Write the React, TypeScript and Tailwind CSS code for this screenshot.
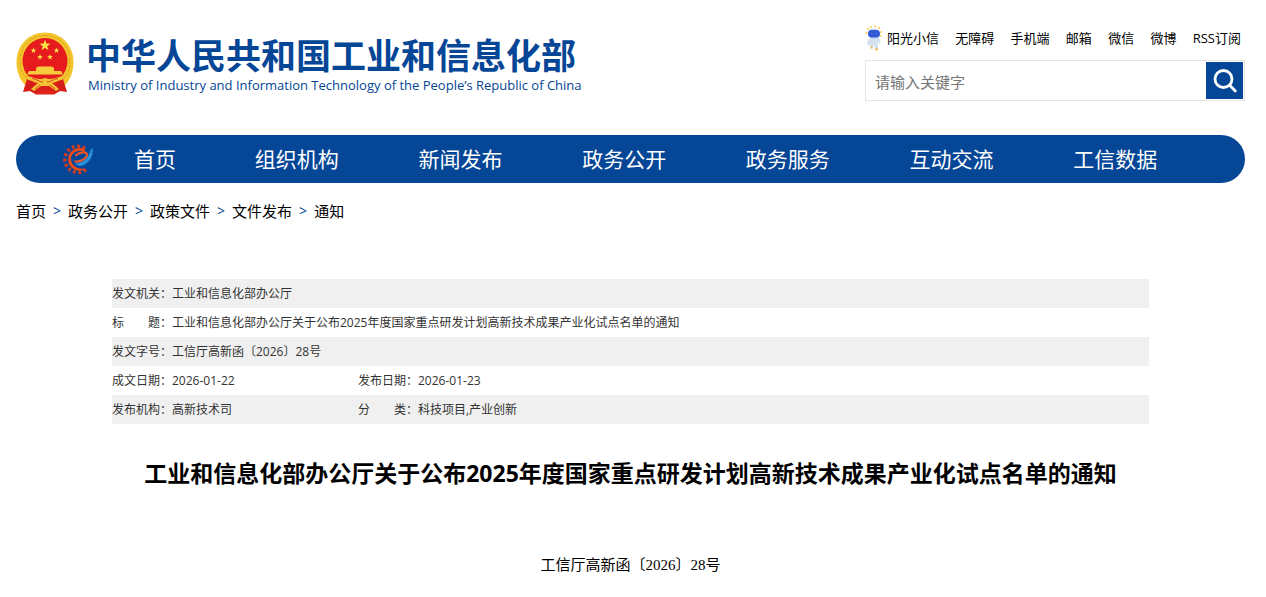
const topLinks = ["阳光小信", "无障碍", "手机端", "邮箱", "微信", "微博", "RSS订阅"];
const navItems = ["组织机构", "新闻发布", "政务公开", "政务服务", "互动交流", "工信数据"];
const crumbs = ["首页", "政务公开", "政策文件", "文件发布", "通知"];

const noticeTitle = "工业和信息化部办公厅关于公布2025年度国家重点研发计划高新技术成果产业化试点名单的通知";

const metaRows: [string, string][][] = [
  [["发文机关：", "工业和信息化部办公厅"]],
  [["标\u3000\u3000题：", noticeTitle]],
  [["发文字号：", "工信厅高新函〔2026〕28号"]],
  [
    ["成文日期：", "2026-01-22"],
    ["发布日期：", "2026-01-23"],
  ],
  [
    ["发布机构：", "高新技术司"],
    ["分\u3000\u3000类：", "科技项目,产业创新"],
  ],
];

const STAR = "0,-1 0.235,-0.324 0.951,-0.309 0.38,0.124 0.588,0.809 0,0.4 -0.588,0.809 -0.38,0.124 -0.951,-0.309 -0.235,-0.324";

function Star({ x, y, r }: { x: number; y: number; r: number }) {
  return <polygon points={STAR} transform={`translate(${x} ${y}) scale(${r})`} fill="#ffe14a" />;
}

function Emblem() {
  return (
    <svg viewBox="0 0 58 64" className="h-16 w-[58px] shrink-0" aria-hidden="true">
      <path d="M29 0.5C13 0.5 0.5 13 0.5 30C0.5 40 4 48 9 53L20 57H38L49 53C54 48 57.500 40 57.500 30C57.500 13 45 0.500 29 0.500Z" fill="#f3c62e" />
      <path d="M29 3.500C15 3.500 4 14 4 29C4 38 7 43 12 48M29 3.500C43 3.500 54 14 54 29C54 38 51 43 46 48" fill="none" stroke="#dfa41f" strokeWidth="1" strokeDasharray="3 1" />
      <ellipse cx="29" cy="29" rx="22.500" ry="23" fill="#e51b1d" />
      <Star x={29} y={13.5} r={5.8} />
      <Star x={17.5} y={18.5} r={3} />
      <Star x={40.5} y={18.5} r={3} />
      <Star x={24} y={25} r={3} />
      <Star x={34} y={25} r={3} />
      <path d="M22 34.500H36L38 36V39H45L47 42.500H11L13 39H20V36Z" fill="#f6cb3c" />
      <path d="M11 47L7 60L14 59L20 62.500H38L44 59L51 60L47 47Z" fill="#d81e18" />
      <path d="M10 44C17 44 20 49 29 46C38 49 41 44 48 44L46 48C42 48 40 51 36 51L43 57L40 59L33 54H25L18 59L15 57L22 51C18 51 16 48 12 48Z" fill="#f3c335" />
      <path d="M16 46.500C21 47 23 50 27 50M42 46.500C37 47 35 50 31 50M24 53L19 57M34 53L39 57" fill="none" stroke="#dc4a1c" strokeWidth="1" />
      <path d="M22 58.500H36L38 62H20Z" fill="#e2251c" />
    </svg>
  );
}

function Mascot() {
  return (
    <svg viewBox="0 0 18 26" className="h-[26px] w-[18px] shrink-0" aria-hidden="true">
      <g fill="#ffcf3a">
        <circle cx="3" cy="4" r="1" />
        <circle cx="6" cy="2" r="1" />
        <circle cx="10" cy="1.300" r="1" />
        <circle cx="14" cy="3" r="1" />
        <circle cx="16" cy="7" r="1" />
        <circle cx="1.500" cy="8" r="1" />
        <circle cx="15.500" cy="11" r="0.900" />
      </g>
      <path d="M5 12L2 18L3.500 21L5 19L5 23H8L9 19L10 24H13L13 16L15 20L15.500 17L13 11Z" fill="#d3e0f0" />
      <rect x="3" y="3.500" width="12" height="10" rx="5" fill="#c9daf6" />
      <rect x="3" y="5" width="12" height="7.500" rx="3.700" fill="#3158d4" />
      <path d="M6 8.500H7.500M10.500 8.500H12" stroke="#4f7de8" strokeWidth="1" />
      <path d="M5.500 22.500H7.500M10 24.300H13" stroke="#f7bd45" strokeWidth="1.800" />
    </svg>
  );
}

function GearLogo() {
  return (
    <svg viewBox="0 0 32 32" className="h-8 w-8 shrink-0" aria-hidden="true">
      <path d="M23 5.500A13 13 0 1 0 24 26.500" fill="none" stroke="#cf3a20" strokeWidth="3.600" strokeDasharray="2.800 2.600" />
      <path d="M23 6.500A11.300 11.300 0 1 0 24 25.500C15 27 9 22 9 16C9 10 16 6 23 8.500Z" fill="#ee4a16" />
      <path d="M12.500 18.300C17 19.500 25.500 16 25 11.500C24.500 8 17 9 13.500 13" fill="none" stroke="#f1562a" strokeWidth="2.200" />
      <path d="M13 20C20 21 27 15 28 7L31 5C32 14 25 24 17 23C15 22.500 13.500 21.500 13 20Z" fill="#1e82cf" />
      <path d="M17 21.300C22 21 27 17 29.500 10" stroke="#4faee8" strokeWidth="0.900" fill="none" />
    </svg>
  );
}

export default function App() {
  return (
    <div className="bg-white pr-[21px] pl-4 font-['Open_Sans','Noto_Sans_CJK_SC',sans-serif] text-black">
      <header className="flex items-start justify-between pt-6">
        <a href="#home" className="flex gap-3 pt-2 text-[#054696]">
          <Emblem />
          <span className="flex flex-col gap-px whitespace-nowrap pt-1">
            <span className="text-[35px] leading-10 font-bold">中华人民共和国工业和信息化部</span>
            <span className="pl-0.5 text-[13px] leading-4 font-medium">
              Ministry of Industry and Information Technology of the People’s Republic of China
            </span>
          </span>
        </a>
        <div className="flex w-[380px] flex-col gap-2">
          <nav aria-label="快捷链接" className="flex h-7 items-center justify-between pr-1 text-[13px] leading-5 whitespace-nowrap">
            {topLinks.map((label, i) => (
              <a key={label} href="#link" className="flex items-center gap-1 hover:text-[#054696]">
                {i === 0 && <Mascot />}
                {label}
              </a>
            ))}
          </nav>
          <form role="search" className="flex border border-[#e5e5e5] p-px" onSubmit={(e) => e.preventDefault()}>
            <input
              type="text"
              aria-label="请输入关键字"
              placeholder="请输入关键字"
              className="min-w-0 flex-1 px-2 pt-1 text-[15px] outline-none placeholder:text-[#757575]"
            />
            <button type="submit" aria-label="搜索" className="flex h-[37px] w-[37px] items-center justify-center bg-[#054696]">
              <svg viewBox="0 0 24 24" className="h-6 w-6" fill="none" stroke="white" strokeWidth="2.800" strokeLinecap="round" aria-hidden="true">
                <circle cx="10.500" cy="10" r="8.500" />
                <path d="M16.500 16L22.300 22" />
              </svg>
            </button>
          </form>
        </div>
      </header>

      <nav aria-label="主导航" className="mt-[34px] flex h-12 items-center rounded-full bg-[#054696] pr-12 pl-[46px] text-[21px] leading-8 whitespace-nowrap text-white">
        <a href="#home" className="flex w-[153px] items-center gap-10">
          <GearLogo />
          首页
        </a>
        {navItems.map((label) => (
          <a key={label} href="#section" className="flex-1 text-center">
            {label}
          </a>
        ))}
      </nav>

      <nav aria-label="面包屑" className="mt-4 text-[15px] leading-6">
        <ol className="flex items-center">
          {crumbs.map((label, i) => (
            <li key={label} className="flex items-center">
              {i > 0 && <span className="mx-[7px] text-sm text-[#054696]">&gt;</span>}
              <a href="#crumb">{label}</a>
            </li>
          ))}
        </ol>
      </nav>

      <main className="px-24 pt-14">
        <table className="w-full table-fixed text-left text-xs text-[#333]">
          <colgroup>
            <col className="w-[60px]" />
            <col className="w-[186px]" />
            <col className="w-[60px]" />
            <col />
          </colgroup>
          <tbody>
            {metaRows.map((row) => (
              <tr key={row[0][0]} className="h-[29px] odd:bg-[#f0f0f0]">
                {row.flatMap(([label, value]) => [
                  <th key={label} scope="row" className="p-0 font-normal whitespace-nowrap">
                    {label}
                  </th>,
                  <td key={value} colSpan={row.length === 1 ? 3 : 1} className="p-0">
                    {value}
                  </td>,
                ])}
              </tr>
            ))}
          </tbody>
        </table>
        <h1 className="mt-[33px] text-center text-[23px] leading-8 font-bold">{noticeTitle}</h1>
        <p className="mt-16 pb-5 text-center font-['Liberation_Serif','Noto_Sans_CJK_SC',serif] text-[15px] leading-6">
          工信厅高新函〔2026〕28号
        </p>
      </main>
    </div>
  );
}
